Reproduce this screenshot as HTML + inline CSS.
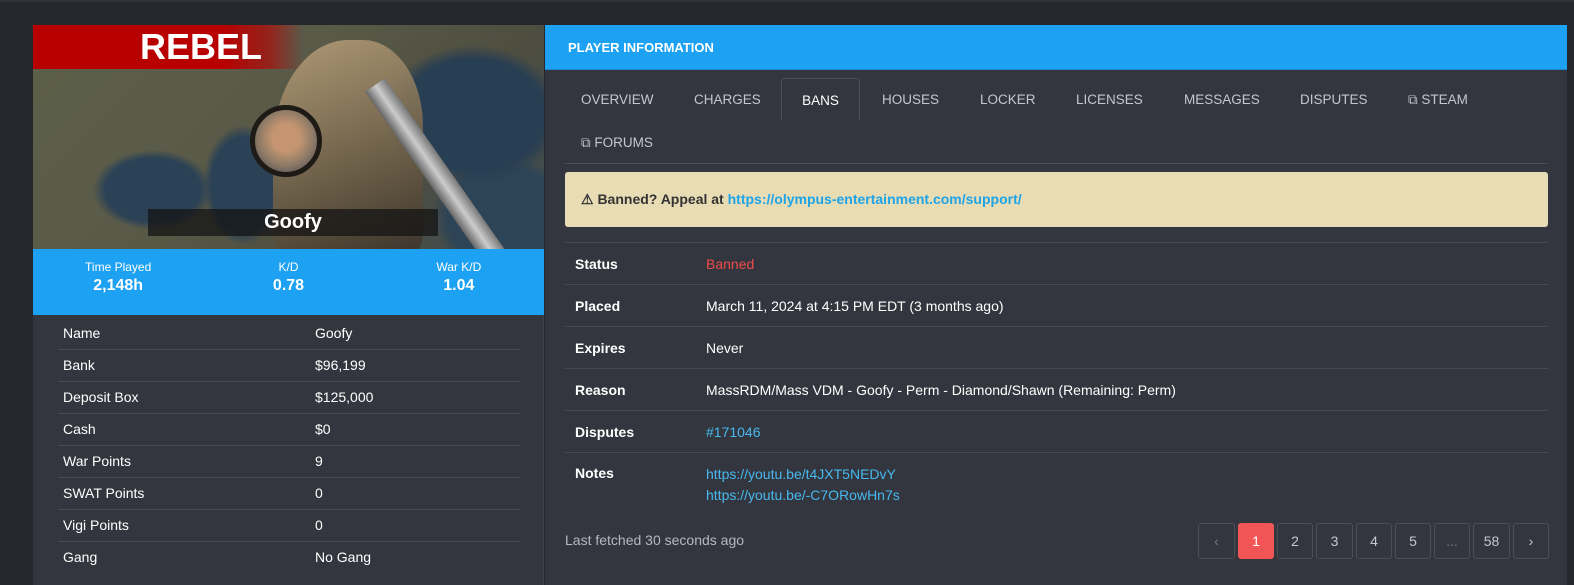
<!DOCTYPE html>
<html><head><meta charset="utf-8"><style>
*{box-sizing:border-box;margin:0;padding:0}
body{width:1574px;height:567px;overflow:hidden;background:#25272e;font-family:"Liberation Sans",Arial,sans-serif;position:relative;color:#fff}
.topline{position:absolute;left:0;top:0;width:1574px;height:2px;background:#30333a}
.left{position:absolute;left:33px;top:25px;width:511px;height:560px;background:#33363e;border-right:1px solid #3e4149}
.img{position:absolute;left:0;top:0;width:511px;height:224px;overflow:hidden;
background:radial-gradient(ellipse 60px 40px at 120px 165px,#2b4256 80%,transparent 100%),
radial-gradient(ellipse 40px 60px at 210px 160px,#2b4256 80%,transparent 100%),
radial-gradient(ellipse 90px 70px at 440px 90px,#283e52 80%,transparent 100%),
radial-gradient(ellipse 70px 60px at 470px 190px,#2d4457 80%,transparent 100%),
linear-gradient(135deg,#5c6048,#5a5a48 40%,#4e4e40 70%,#3c4a52)}
.soldier{position:absolute;left:240px;top:15px;width:150px;height:215px;background:linear-gradient(160deg,#b8a07a,#7a6a50 50%,#3a3228);border-radius:50% 40% 10% 10%;opacity:.9}
.gun{position:absolute;left:330px;top:60px;width:24px;height:230px;background:linear-gradient(90deg,#666,#ccc,#777);transform:rotate(-35deg);transform-origin:top}
.rebel{position:absolute;left:0;top:0;width:270px;height:44px;background:linear-gradient(90deg,#b80000 70%,rgba(184,0,0,.6) 88%,transparent);}
.rebel span{position:absolute;left:107px;top:0;font:bold 36px/44px "Liberation Sans",sans-serif;letter-spacing:0;color:#fff}
.avatar{position:absolute;left:217px;top:80px;width:72px;height:72px;border-radius:50%;border:5px solid #1e1a16;background:radial-gradient(circle at 50% 45%,#c49570 30%,#8c7a66 60%,#3a3c50)}
.namebar{position:absolute;left:115px;top:184px;width:290px;height:27px;background:rgba(20,20,20,.75);text-align:center;font:bold 20px/27px "Liberation Sans",sans-serif}
.stats{position:absolute;left:0;top:224px;width:511px;height:66px;background:#1da1f2;display:flex}
.stats div{flex:1;text-align:center;padding-top:11px;font-size:12px}
.stats b{display:block;font-size:16px;margin-top:3px}
table.pt{position:absolute;left:25px;top:292px;width:462px;border-collapse:collapse;font-size:14px}
table.pt td{height:32px;border-bottom:1px solid #464a52;padding-left:5px}
table.pt td:first-child{width:252px}
.right{position:absolute;left:545px;top:25px;width:1022px;height:560px;background:#33363e}
.hdr{height:45px;background:#1da1f2;font:bold 13px/45px "Liberation Sans",sans-serif;padding-left:23px;border-bottom:1px solid #1a8ad0}
.tabs{position:absolute;left:20px;top:53px;width:982px;height:86px;border-bottom:1px solid #4a4e56}
.tab{position:absolute;font-size:13.5px;color:#c5c7cc;top:0;height:42px;line-height:43px}
.tab.act{border:1px solid #4a4e56;border-bottom:none;border-radius:3px 3px 0 0;background:#33363e;color:#fff;text-align:center}
.alert{position:absolute;left:20px;top:147px;width:983px;height:55px;background:#e8dcb5;border-radius:3px;color:#333;font-size:14px;font-weight:bold;line-height:55px;padding-left:16px}
.alert a{color:#1ea4e8;text-decoration:none}
table.bt{position:absolute;left:20px;top:217px;width:983px;border-collapse:collapse;font-size:14px}
table.bt td{border-top:1px solid #464a52;height:42px;padding-left:10px;vertical-align:middle}
table.bt td:first-child{width:131px;font-weight:bold}
.lnk{color:#48b8ee}
.foot{position:absolute;left:20px;top:507px;font-size:14px;color:#b5b8be}
.pg{position:absolute;top:498px;height:36px;border:1px solid #4a4e56;border-radius:3px;text-align:center;line-height:34px;font-size:14px;color:#c5c7cc}
</style></head><body>
<div class="topline"></div>
<div class="left">
 <div class="img">
  <div class="soldier"></div><div class="gun"></div>
  <div class="rebel"><span>REBEL</span></div>
  <div class="avatar"></div>
  <div class="namebar">Goofy</div>
 </div>
 <div class="stats">
  <div>Time Played<b>2,148h</b></div>
  <div>K/D<b>0.78</b></div>
  <div>War K/D<b>1.04</b></div>
 </div>
 <table class="pt">
  <tr><td>Name</td><td>Goofy</td></tr>
  <tr><td>Bank</td><td>$96,199</td></tr>
  <tr><td>Deposit Box</td><td>$125,000</td></tr>
  <tr><td>Cash</td><td>$0</td></tr>
  <tr><td>War Points</td><td>9</td></tr>
  <tr><td>SWAT Points</td><td>0</td></tr>
  <tr><td>Vigi Points</td><td>0</td></tr>
  <tr><td style="border:none">Gang</td><td style="border:none">No Gang</td></tr>
 </table>
</div>
<div class="right">
 <div class="hdr">PLAYER INFORMATION</div>
 <div class="tabs">
  <div class="tab" style="left:16px">OVERVIEW</div>
  <div class="tab" style="left:129px">CHARGES</div>
  <div class="tab act" style="left:216px;width:79px">BANS</div>
  <div class="tab" style="left:317px">HOUSES</div>
  <div class="tab" style="left:415px">LOCKER</div>
  <div class="tab" style="left:511px">LICENSES</div>
  <div class="tab" style="left:619px">MESSAGES</div>
  <div class="tab" style="left:735px">DISPUTES</div>
  <div class="tab" style="left:843px">&#x29C9; STEAM</div>
  <div class="tab" style="left:16px;top:43px">&#x29C9; FORUMS</div>
 </div>
 <div class="alert">&#9888; Banned? Appeal at <a>https://olympus-entertainment.com/support/</a></div>
 <table class="bt">
  <tr><td>Status</td><td style="color:#ef4b4b">Banned</td></tr>
  <tr><td>Placed</td><td>March 11, 2024 at 4:15 PM EDT (3 months ago)</td></tr>
  <tr><td>Expires</td><td>Never</td></tr>
  <tr><td>Reason</td><td>MassRDM/Mass VDM - Goofy - Perm - Diamond/Shawn (Remaining: Perm)</td></tr>
  <tr><td>Disputes</td><td class="lnk">#171046</td></tr>
  <tr><td style="vertical-align:top;padding-top:12px;height:57px">Notes</td><td class="lnk" style="vertical-align:top;padding-top:11px;line-height:21px">https://youtu.be/t4JXT5NEDvY<br>https://youtu.be/-C7ORowHn7s</td></tr>
 </table>
 <div class="foot">Last fetched 30 seconds ago</div>
 <div class="pg" style="left:653px;width:37px;color:#777">&lsaquo;</div>
 <div class="pg" style="left:693px;width:36px;background:#f25555;border-color:#f25555;color:#fff">1</div>
 <div class="pg" style="left:732px;width:36px">2</div>
 <div class="pg" style="left:771px;width:37px">3</div>
 <div class="pg" style="left:811px;width:36px">4</div>
 <div class="pg" style="left:850px;width:36px">5</div>
 <div class="pg" style="left:889px;width:36px;color:#777">...</div>
 <div class="pg" style="left:928px;width:37px">58</div>
 <div class="pg" style="left:968px;width:36px">&rsaquo;</div>
</div>
</body></html>
